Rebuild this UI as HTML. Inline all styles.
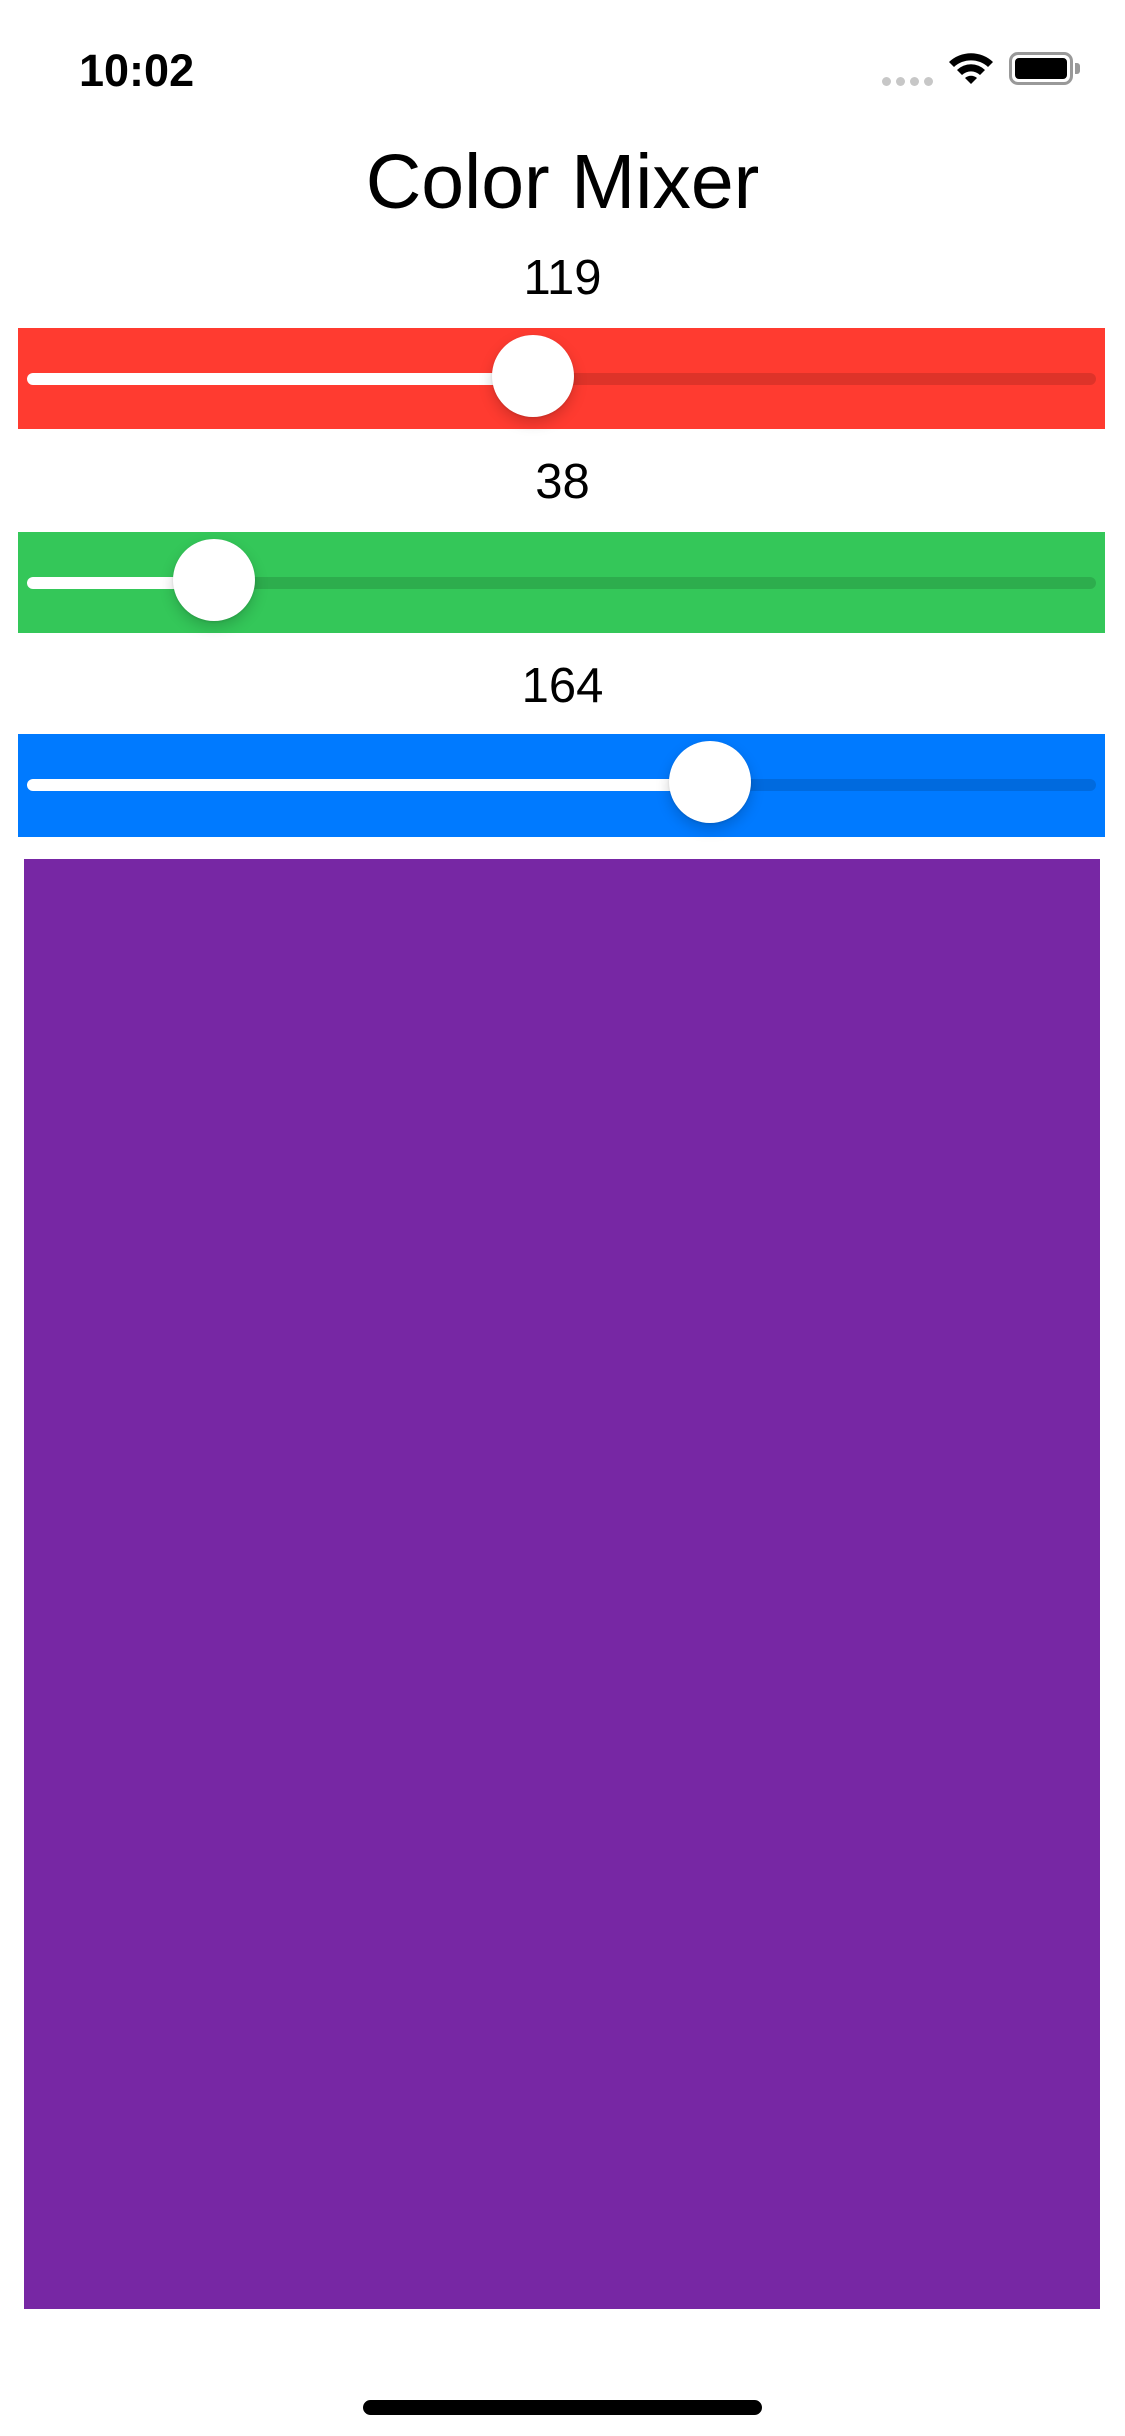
<!DOCTYPE html>
<html><head><meta charset="utf-8"><style>
*{margin:0;padding:0;box-sizing:border-box}
html,body{width:1125px;height:2436px;background:#fff;overflow:hidden;position:relative;font-family:"Liberation Sans",sans-serif}
.abs{position:absolute}
.time{left:79px;top:45px;font-size:45px;font-weight:bold;letter-spacing:0px}
.title{left:0;width:1125px;text-align:center;top:136px;font-size:77px;line-height:92px}
.lbl{left:0;width:1125px;text-align:center;font-size:49px;line-height:60px}
.band{left:18px;width:1087px;height:101px}
.track{position:absolute;left:9px;right:9px;top:45px;height:12px;border-radius:6px;background:rgba(0,0,0,0.13)}
.fill{position:absolute;left:9px;top:45px;height:12px;border-radius:6px;background:#fff}
.thumb{position:absolute;top:7px;width:82px;height:82px;border-radius:50%;background:#fff;box-shadow:0 6px 14px rgba(0,0,0,0.18),0 1px 2px rgba(0,0,0,0.1)}
</style></head><body>
<div class="abs time">10:02</div>
<div class="abs" style="left:882px;top:77px;width:9px;height:9px;border-radius:50%;background:#c7c7c7"></div>
<div class="abs" style="left:896px;top:77px;width:9px;height:9px;border-radius:50%;background:#c7c7c7"></div>
<div class="abs" style="left:910px;top:77px;width:9px;height:9px;border-radius:50%;background:#c7c7c7"></div>
<div class="abs" style="left:924px;top:77px;width:9px;height:9px;border-radius:50%;background:#c7c7c7"></div>
<svg class="abs" style="left:946px;top:50px" width="50" height="36" viewBox="0 0 50 36">
<path d="M3 12 A32 32 0 0 1 47 12 L42 17 A25 25 0 0 0 8 17 Z" fill="#000"/>
<path d="M11 20 A20 20 0 0 1 39 20 L34 25 A13 13 0 0 0 16 25 Z" fill="#000"/>
<path d="M19 28 A9 9 0 0 1 31 28 L25 34 Z" fill="#000"/>
</svg>
<div class="abs" style="left:1009px;top:52px;width:64px;height:33px;border:3px solid #999;border-radius:9px"></div>
<div class="abs" style="left:1015px;top:58px;width:52px;height:21px;background:#000;border-radius:4px"></div>
<div class="abs" style="left:1075px;top:63px;width:5px;height:11px;background:#999;border-radius:0 3px 3px 0"></div>

<div class="abs title">Color Mixer</div>

<div class="abs lbl" style="top:248px">119</div>
<div class="abs band" style="top:328px;background:#ff3b30">
 <div class="track"></div><div class="fill" style="width:510px"></div><div class="thumb" style="left:474px"></div>
</div>
<div class="abs lbl" style="top:452px">38</div>
<div class="abs band" style="top:532px;background:#34c759">
 <div class="track"></div><div class="fill" style="width:195px"></div><div class="thumb" style="left:155px"></div>
</div>
<div class="abs lbl" style="top:656px">164</div>
<div class="abs band" style="top:734px;height:103px;background:#007aff">
 <div class="track"></div><div class="fill" style="width:690px"></div><div class="thumb" style="left:651px"></div>
</div>

<div class="abs" style="left:24px;top:859px;width:1076px;height:1450px;background:#7727a4"></div>
<div class="abs" style="left:363px;top:2400px;width:399px;height:15px;border-radius:8px;background:#000"></div>
</body></html>
